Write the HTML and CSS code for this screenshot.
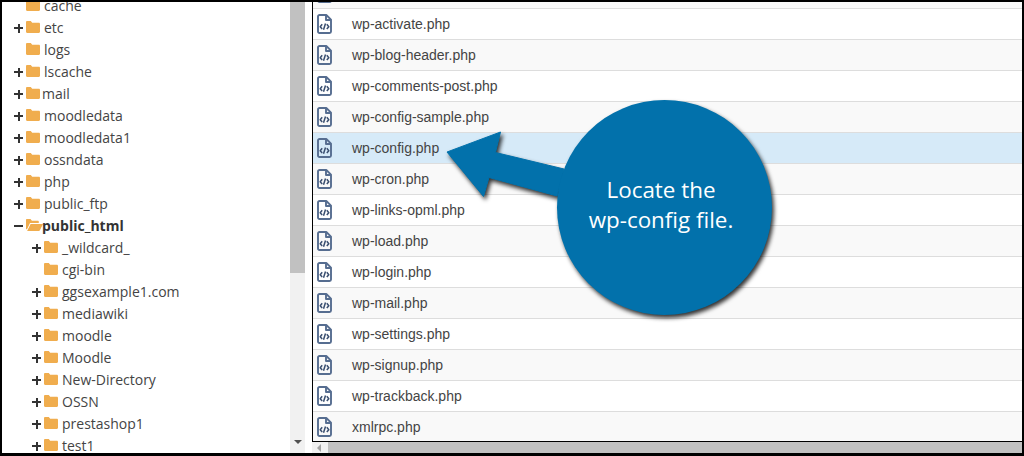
FILE: index.html
```html
<!DOCTYPE html>
<html lang="en">
<head>
<meta charset="utf-8">
<title>File Manager</title>
<link rel="stylesheet" href="styles.css">
</head>
<body>
<svg class="defs" width="0" height="0" aria-hidden="true">
  <symbol id="folder" viewBox="0 0 14 12"><path d="M1.2 0h3.6l1.4 1.7h6.6c.7 0 1.2.5 1.2 1.2v7.9c0 .7-.5 1.2-1.2 1.2H1.2C.5 12 0 11.500 0 10.800V1.200C0 .5.500 0 1.200 0z"/></symbol>
  <symbol id="folder-open" viewBox="0 0 17 12"><path d="M1 0h3.500l1.400 1.700h5.900c.6 0 1 .4 1 1V4H4L1.300 9.800 0 10.500V1C0 .4.400 0 1 0z"/><path d="M4.600 5H17l-3 6.100c-.2.500-.6.900-1.200.9H1.100z"/></symbol>
  <symbol id="file-code" viewBox="0 0 15 20"><path class="ol" d="M2.500 1h6.800L14 5.700V17.500c0 .8-.7 1.500-1.500 1.500h-10C1.700 19 1 18.300 1 17.500v-15C1 1.700 1.700 1 2.500 1z"/><path class="ol" d="M9 1.200V6h4.800"/><path class="ol thin" d="M5.200 10.300 3.200 12.700l2 2.300M9.800 10.300l2 2.400-2 2.300M8.500 9.500l-2 6.300"/></symbol>
</svg>
<main class="frame">
  <nav class="tree">
    <ul class="tree-list">
      <li class="node"><span class="toggle"></span><svg class="fld"><use href="#folder"/></svg><span>cache</span></li>
      <li class="node"><span class="toggle plus"></span><svg class="fld"><use href="#folder"/></svg><span>etc</span></li>
      <li class="node"><span class="toggle"></span><svg class="fld"><use href="#folder"/></svg><span>logs</span></li>
      <li class="node"><span class="toggle plus"></span><svg class="fld"><use href="#folder"/></svg><span>lscache</span></li>
      <li class="node"><span class="toggle plus"></span><svg class="fld"><use href="#folder"/></svg><span class="tight">mail</span></li>
      <li class="node"><span class="toggle plus"></span><svg class="fld"><use href="#folder"/></svg><span>moodledata</span></li>
      <li class="node"><span class="toggle plus"></span><svg class="fld"><use href="#folder"/></svg><span>moodledata1</span></li>
      <li class="node"><span class="toggle plus"></span><svg class="fld"><use href="#folder"/></svg><span>ossndata</span></li>
      <li class="node"><span class="toggle plus"></span><svg class="fld"><use href="#folder"/></svg><span>php</span></li>
      <li class="node"><span class="toggle plus"></span><svg class="fld"><use href="#folder"/></svg><span>public_ftp</span></li>
      <li class="node current"><span class="toggle minus"></span><svg class="fld-open"><use href="#folder-open"/></svg><span>public_html</span></li>
      <li class="node sub"><span class="toggle plus"></span><svg class="fld"><use href="#folder"/></svg><span>_wildcard_</span></li>
      <li class="node sub"><span class="toggle"></span><svg class="fld"><use href="#folder"/></svg><span>cgi-bin</span></li>
      <li class="node sub"><span class="toggle plus"></span><svg class="fld"><use href="#folder"/></svg><span>ggsexample1.com</span></li>
      <li class="node sub"><span class="toggle plus"></span><svg class="fld"><use href="#folder"/></svg><span>mediawiki</span></li>
      <li class="node sub"><span class="toggle plus"></span><svg class="fld"><use href="#folder"/></svg><span>moodle</span></li>
      <li class="node sub"><span class="toggle plus"></span><svg class="fld"><use href="#folder"/></svg><span>Moodle</span></li>
      <li class="node sub"><span class="toggle plus"></span><svg class="fld"><use href="#folder"/></svg><span>New-Directory</span></li>
      <li class="node sub"><span class="toggle plus"></span><svg class="fld"><use href="#folder"/></svg><span>OSSN</span></li>
      <li class="node sub"><span class="toggle plus"></span><svg class="fld"><use href="#folder"/></svg><span>prestashop1</span></li>
      <li class="node sub"><span class="toggle plus"></span><svg class="fld"><use href="#folder"/></svg><span>test1</span></li>
    </ul>
  </nav>
  <div class="vbar"><div class="vthumb"></div><div class="vtrack"><span class="arrow-down"></span></div></div>
  <section class="files">
    <div class="file-box">
      <ul class="file-list">
        <li class="file"><svg class="ico"><use href="#file-code"/></svg><span class="offscreen-name"></span></li>
        <li class="file"><svg class="ico"><use href="#file-code"/></svg><span>wp-activate.php</span></li>
        <li class="file"><svg class="ico"><use href="#file-code"/></svg><span>wp-blog-header.php</span></li>
        <li class="file"><svg class="ico"><use href="#file-code"/></svg><span>wp-comments-post.php</span></li>
        <li class="file"><svg class="ico"><use href="#file-code"/></svg><span>wp-config-sample.php</span></li>
        <li class="file selected"><svg class="ico"><use href="#file-code"/></svg><span>wp-config.php</span></li>
        <li class="file"><svg class="ico"><use href="#file-code"/></svg><span>wp-cron.php</span></li>
        <li class="file"><svg class="ico"><use href="#file-code"/></svg><span>wp-links-opml.php</span></li>
        <li class="file"><svg class="ico"><use href="#file-code"/></svg><span>wp-load.php</span></li>
        <li class="file"><svg class="ico"><use href="#file-code"/></svg><span>wp-login.php</span></li>
        <li class="file"><svg class="ico"><use href="#file-code"/></svg><span>wp-mail.php</span></li>
        <li class="file"><svg class="ico"><use href="#file-code"/></svg><span>wp-settings.php</span></li>
        <li class="file"><svg class="ico"><use href="#file-code"/></svg><span>wp-signup.php</span></li>
        <li class="file"><svg class="ico"><use href="#file-code"/></svg><span>wp-trackback.php</span></li>
        <li class="file"><svg class="ico"><use href="#file-code"/></svg><span>xmlrpc.php</span></li>
      </ul>
    </div>
    <div class="hbar"><span class="arrow-left"></span><div class="hthumb"></div></div>
  </section>
  <aside class="callout">
    <svg class="callout-shape" viewBox="0 0 340 224" width="340" height="224" aria-hidden="true">
      <path class="callout-arrow" d="M7 54 60.500 34 55.500 54.500 124 71 117 98 49 79.500 43.500 98.500z"/>
      <circle cx="224.500" cy="109.500" r="107.500"/>
    </svg>
    <p class="callout-text">Locate the<br>wp-config file.</p>
  </aside>
</main>
</body>
</html>
```
FILE: styles.css
```css
* { box-sizing: border-box; }
html, body { margin: 0; padding: 0; }
body { width: 1024px; height: 456px; overflow: hidden; background: #000; }
ul { list-style: none; margin: 0; padding: 0; }
.defs { position: absolute; }

.frame {
  position: relative;
  display: flex;
  width: 1024px;
  height: 456px;
  border: solid #000;
  border-width: 2px 2px 3px 2px;
  background: #fff;
  overflow: hidden;
}

/* Folder tree */
.tree { width: 288px; flex: none; overflow: hidden; }
.tree-list { margin-top: -7px; }
.node {
  display: flex;
  align-items: center;
  height: 22px;
  padding-left: 12px;
  font: 14px/22px "Open Sans", sans-serif;
  color: #444;
}
.node.sub { padding-left: 30px; }
.node.current { font-weight: 700; color: #333; }
.toggle { position: relative; width: 12px; height: 22px; flex: none; }
.toggle.plus::before, .toggle.minus::before {
  content: "";
  position: absolute;
  left: 0; top: 10px;
  width: 9px; height: 2px;
  background: #333;
}
.toggle.plus::after {
  content: "";
  position: absolute;
  left: 3.500px; top: 6.500px;
  width: 2px; height: 9px;
  background: #333;
}
.fld { width: 14px; height: 12px; fill: #f0ad4e; flex: none; margin-right: 4px; margin-top: -2px; }
.fld-open { width: 17px; height: 12px; fill: #f0ad4e; flex: none; margin-right: -1px; margin-top: -2px; }
.tight { margin-left: -2px; }

/* Tree scrollbar */
.vbar { width: 15px; flex: none; display: flex; flex-direction: column; background: #f1f1f1; }
.vthumb { height: 271px; background: #c1c1c1; }
.vtrack { flex: 1; display: flex; align-items: flex-end; justify-content: center; padding-bottom: 9px; }
.arrow-down { width: 0; height: 0; border: solid transparent; border-width: 4px 4px 0; border-top-color: #505050; }

/* File list */
.files { flex: 1; min-width: 0; display: flex; flex-direction: column; margin-left: 7px; }
.file-box { height: 440px; border-left: 1px solid #000; border-bottom: 1px solid #000; overflow: hidden; flex: none; }
.file-list { margin-top: -24px; }
.file {
  display: flex;
  align-items: center;
  height: 31px;
  border-bottom: 1px solid #ddd;
  padding-left: 4px;
  font: 14px/30px "Liberation Sans", Arial, sans-serif;
  color: #444;
  background: #fff;
}
.file:nth-child(odd) { background: #f9f9f9; }
.file.selected { background: #d6eaf8; }
.ico { width: 15px; height: 20px; flex: none; margin-right: 20px; fill: none; }
.ol { fill: none; stroke: #566d90; stroke-width: 1.900; stroke-linejoin: round; }
.thin { stroke: #3a4f70; stroke-width: 1.500; }

.hbar { flex: 1; background: #f1f1f1; display: flex; align-items: center; }
.arrow-left { width: 0; height: 0; margin-left: 5px; flex: none; border: solid transparent; border-width: 4px 4px 4px 0; border-right-color: #a3a3a3; }
.hthumb { flex: 1; height: 100%; margin-left: 7px; background: #c1c1c1; }

/* Callout over the file list */
.callout { position: absolute; left: 438px; top: 96px; width: 340px; height: 224px; }
.callout-shape { display: block; fill: #0271ab; overflow: visible; filter: drop-shadow(2px 3px 2px rgba(0,0,0,.8)); }
.callout-arrow { stroke: #0271ab; stroke-width: 1; stroke-linejoin: round; }
.callout-text {
  position: absolute;
  left: 124px; top: 77px;
  width: 194px;
  margin: 0;
  text-align: center;
  font: 22.400px/30px "Open Sans", sans-serif;
  color: #fff;
}
```
